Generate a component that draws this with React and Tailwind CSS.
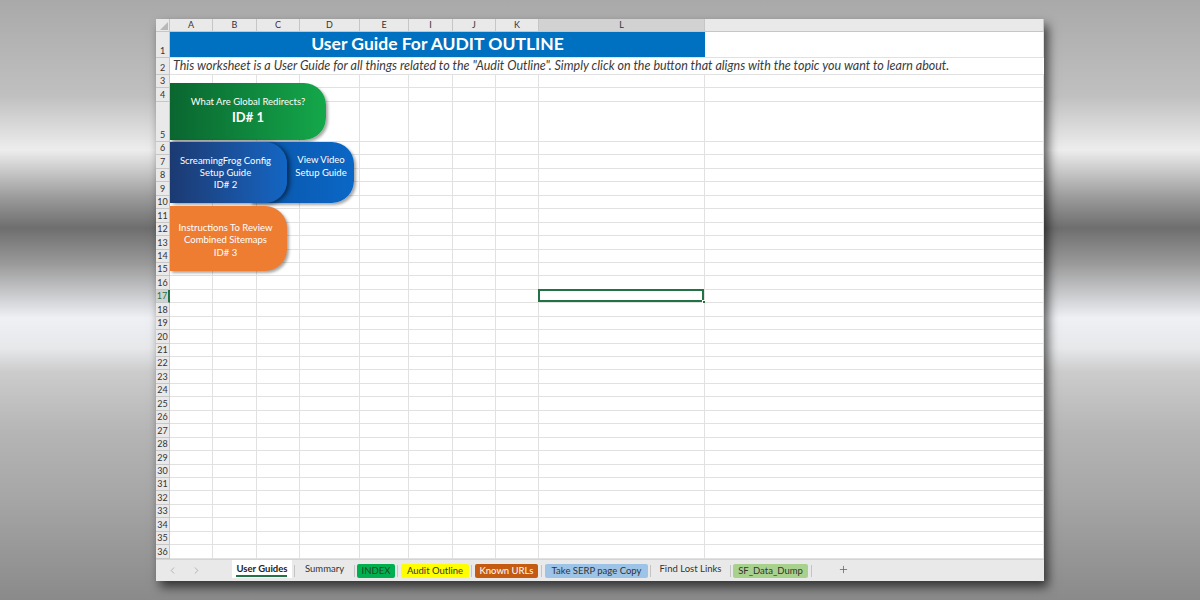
import { ChevronLeft, ChevronRight, Plus } from "lucide-react";

const COLS = ["A", "B", "C", "D", "E", "I", "J", "K", "L", ""];
const ROWS = [3, 4, 5, ...Array.from({ length: 31 }, (_, i) => i + 6)];

function RowHead({ n, active }) {
  return (
    <div
      className={
        active
          ? "flex items-end justify-center border-b border-r-2 border-[#c6c6c6] border-r-[#217346] bg-[#d2d2d2] text-[9px] leading-[12px] text-[#217346]"
          : "flex items-end justify-center border-b border-r border-[#c6c6c6] bg-[#e9e9e9] text-[9px] leading-[12px] text-[#333]"
      }
    >
      {n}
    </div>
  );
}

function Cell({ selected }) {
  return (
    <div className="relative border-b border-r border-[#e1e1e1] bg-white">
      {selected && (
        <>
          <div className="absolute -left-px -top-px right-0 bottom-0 border-2 border-[#217346]" />
          <div className="absolute -bottom-[3px] -right-[3px] h-[5px] w-[5px] border border-white bg-[#217346]" />
        </>
      )}
    </div>
  );
}

function Sep({ className }) {
  return <div className={"h-[12px] w-px self-center bg-[#c4c4c4] " + className} />;
}

export default function App() {
  return (
    <div className="h-[600px] w-[1200px] overflow-hidden bg-[linear-gradient(180deg,#a9a9a9_0%,#c0c0c0_16%,#ededed_25%,#9a9a9a_33%,#6e6e6e_38%,#9a9a9a_44%,#eef0f4_53%,#e6e8ea_58%,#cccccc_62%,#b5b5b5_72%,#a6a6a6_83%,#8a8a8a_100%)] pl-[156px] pt-[19px] font-['Lato',sans-serif]">
      <div className="flex h-[562px] w-[888px] flex-col bg-white shadow-[4px_6px_10px_rgba(0,0,0,0.65)]">
        <div className="relative grid flex-1 grid-cols-[14px_43px_44px_43px_60px_49px_44px_43px_43px_166px_1fr] grid-rows-[13px_26px_17px_13px_14px_40px_repeat(31,13.45px)]">
          {/* column headers */}
          <div className="relative border-b border-r border-[#c6c6c6] bg-[#e9e9e9]">
            <svg className="absolute bottom-[1px] right-[1px]" width="8" height="8" viewBox="0 0 8 8">
              <path d="M8 0 L8 8 L0 8 Z" fill="#b8b8b8" />
            </svg>
          </div>
          {COLS.map((c, i) => (
            <div
              key={"h" + i}
              className={
                c === "L"
                  ? "flex items-center justify-center border-b border-r border-[#c6c6c6] bg-[#d2d2d2] text-[9px] text-[#333]"
                  : "flex items-center justify-center border-b border-r border-[#c6c6c6] bg-[#e9e9e9] text-[9px] text-[#333]"
              }
            >
              {c}
            </div>
          ))}

          {/* row 1 */}
          <RowHead n={1} />
          <div className="col-span-9 flex items-center justify-center border-b border-[#e1e1e1] bg-[#0070c0] text-[17.5px] font-bold text-white">
            User Guide For AUDIT OUTLINE
          </div>
          <Cell />

          {/* row 2 */}
          <RowHead n={2} />
          <div className="col-span-10 flex items-center whitespace-nowrap border-b border-[#e1e1e1] pl-[3px] text-[12.5px] italic text-[#3a3a3a]">
            This worksheet is a User Guide for all things related to the "Audit Outline". Simply click on the button that aligns with the topic you want to learn about.
          </div>

          {ROWS.map((r) => (
            <div key={r} className="contents">
              <RowHead n={r} active={r === 17} />
              {COLS.map((c, i) => (
                <Cell key={i} selected={r === 17 && c === "L"} />
              ))}
            </div>
          ))}

          {/* shapes floating over the sheet */}
          <div className="absolute left-[14px] top-[64px] flex h-[57px] w-[156px] flex-col items-center justify-center gap-[2px] rounded-r-[22px] bg-linear-to-r from-[#0a6630] to-[#14a84a] pb-[2px] text-white shadow-[2px_2px_3px_rgba(0,0,0,0.35)]">
            <div className="text-[9.5px] leading-[12px]">What Are Global Redirects?</div>
            <div className="text-[13px] font-bold leading-[15px]">ID# 1</div>
          </div>

          <div className="absolute left-[94px] top-[123px] flex h-[61px] w-[104px] flex-col items-center justify-center rounded-r-[22px] bg-linear-to-r from-[#0b55a8] to-[#0a67c6] pb-[14px] pl-[38px] text-[9.5px] leading-[13px] text-white shadow-[2px_2px_3px_rgba(0,0,0,0.35)]">
            <div>View Video</div>
            <div>Setup Guide</div>
          </div>

          <div className="absolute left-[14px] top-[123px] flex h-[61px] w-[117px] flex-col items-center justify-center rounded-r-[22px] bg-linear-to-r from-[#1b3a72] to-[#1266c4] pr-[6px] pt-[1px] text-[9.5px] leading-[12px] text-white shadow-[3px_1px_4px_rgba(0,0,0,0.5)]">
            <div>ScreamingFrog Config</div>
            <div>Setup Guide</div>
            <div>ID# 2</div>
          </div>

          <div className="absolute left-[14px] top-[187px] flex h-[65px] w-[117px] flex-col items-center justify-center rounded-r-[22px] bg-[#ee7d31] pr-[6px] pt-[4px] text-[9.5px] leading-[12.5px] text-white shadow-[2px_2px_3px_rgba(0,0,0,0.35)]">
            <div>Instructions To Review</div>
            <div>Combined Sitemaps</div>
            <div>ID# 3</div>
          </div>
        </div>

        {/* sheet tabs */}
        <div className="flex h-[22px] items-start border-t border-[#d4d4d4] bg-[#e9e9e9] text-[9.5px] text-[#333]">
          <div className="flex h-full w-[76px] items-center gap-[13px] pl-[11px] text-[#9a9a9a]">
            <ChevronLeft size={11} strokeWidth={1.5} />
            <ChevronRight size={11} strokeWidth={1.5} />
          </div>
          <div className="relative flex h-[18px] w-[60px] items-center justify-center bg-white font-bold text-[#222]">
            User Guides
            <div className="absolute bottom-[1px] left-[4px] right-[5px] h-[2px] bg-[#217346]" />
          </div>
          <Sep className="mx-[2px]" />
          <div className="flex h-[18px] w-[55px] items-center justify-center">Summary</div>
          <Sep className="mx-[2px]" />
          <div className="mt-[4px] flex h-[14px] w-[38px] items-center justify-center rounded-[2px] bg-[#00b050] text-[#1e4620]">INDEX</div>
          <Sep className="ml-[2px] mr-[3px]" />
          <div className="mt-[4px] flex h-[14px] w-[68px] items-center justify-center rounded-[2px] bg-[#ffff00] text-[#333]">Audit Outline</div>
          <Sep className="ml-[2px] mr-[3px]" />
          <div className="mt-[4px] flex h-[14px] w-[63px] items-center justify-center rounded-[2px] bg-[#c55a11] text-white">Known URLs</div>
          <Sep className="mx-[3px]" />
          <div className="mt-[4px] flex h-[14px] w-[103px] items-center justify-center rounded-[2px] bg-[#9dc3e6] text-[#333]">Take SERP page Copy</div>
          <Sep className="ml-[2px] mr-[1px]" />
          <div className="flex h-[18px] w-[77px] items-center justify-center">Find Lost Links</div>
          <Sep className="ml-[1px] mr-[2px]" />
          <div className="mt-[4px] flex h-[14px] w-[75px] items-center justify-center rounded-[2px] bg-[#a9d18e] text-[#333]">SF_Data_Dump</div>
          <Sep className="ml-[3px]" />
          <div className="ml-[24px] flex h-[18px] w-[14px] items-center justify-center text-[#555]">
            <Plus size={11} strokeWidth={1.5} />
          </div>
        </div>
      </div>
    </div>
  );
}
